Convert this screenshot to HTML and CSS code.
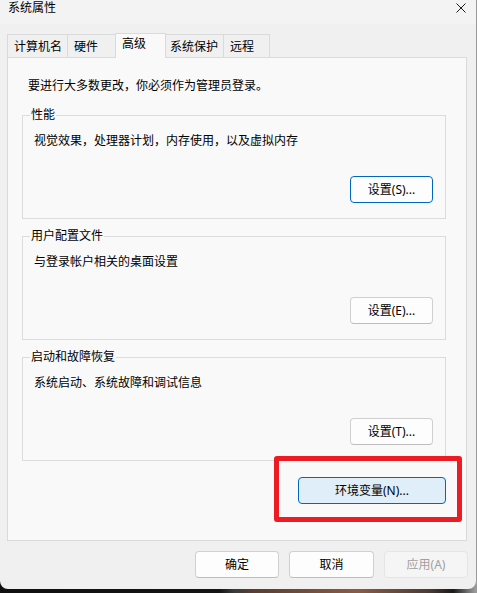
FILE: index.html
```html
<!DOCTYPE html>
<html lang="zh-CN">
<head>
<meta charset="utf-8">
<title>系统属性</title>
<link rel="stylesheet" href="styles.css">
</head>
<body>
<div class="window">
  <div class="titlebar">
    <span class="title">系统属性</span>
    <button class="close" aria-label="关闭">
      <svg width="10" height="10" viewBox="0 0 10 10"><path d="M0.5 0.5L9.5 9.5M9.5 0.5L0.5 9.5" stroke="#1a1a1a" stroke-width="1" fill="none"/></svg>
    </button>
  </div>
  <div class="content">
    <div class="tabs">
      <div class="tab tab-1">计算机名</div>
      <div class="tab tab-2">硬件</div>
      <div class="tab tab-3 tab-active">高级</div>
      <div class="tab tab-4">系统保护</div>
      <div class="tab tab-5">远程</div>
    </div>
    <div class="panel">
      <p class="note">要进行大多数更改，你必须作为管理员登录。</p>
      <fieldset class="group">
        <legend>性能</legend>
        <p class="desc">视觉效果，处理器计划，内存使用，以及虚拟内存</p>
        <div class="actions"><button class="btn btn-focus">设置(S)...</button></div>
      </fieldset>
      <fieldset class="group">
        <legend>用户配置文件</legend>
        <p class="desc">与登录帐户相关的桌面设置</p>
        <div class="actions"><button class="btn">设置(E)...</button></div>
      </fieldset>
      <fieldset class="group">
        <legend>启动和故障恢复</legend>
        <p class="desc">系统启动、系统故障和调试信息</p>
        <div class="actions"><button class="btn">设置(T)...</button></div>
      </fieldset>
      <div class="env-row">
        <div class="env-wrap">
          <button class="btn btn-hover env">环境变量(N)...</button>
          <span class="highlight"></span>
        </div>
      </div>
    </div>
    <div class="footer">
      <button class="btn foot-btn">确定</button>
      <button class="btn foot-btn foot-cancel">取消</button>
      <button class="btn foot-btn btn-disabled">应用(A)</button>
    </div>
  </div>
</div>
</body>
</html>
```

FILE: styles.css
```css
* { box-sizing: border-box; }

html, body {
  margin: 0;
  padding: 0;
}

body {
  width: 477px;
  height: 593px;
  overflow: hidden;
  background: linear-gradient(90deg, #101010 0, #141414 46%, #3a3a3a 49%, #5a3d32 53%, #8a5b44 75%, #4a3a34 90%, #1a1a1a 95%, #9a9a9a 99.6%);
  font-family: "Noto Sans", "Noto Sans CJK SC", sans-serif;
  font-size: 12px;
  color: #000;
}

.window {
  width: 476px;
  height: 589px;
  background: #f0f0f0;
  border-radius: 0 0 8px 8px;
  overflow: hidden;
  display: flex;
  flex-direction: column;
}

.titlebar {
  height: 24px;
  background: #f3f3f3;
  display: flex;
  justify-content: space-between;
  align-items: flex-start;
  padding-left: 8px;
}

.title {
  line-height: 16px;
}

.close {
  width: 10px;
  height: 10px;
  margin: 3px 10px 0 0;
  padding: 0;
  border: 0;
  background: none;
  display: block;
}

.close svg { display: block; }

.content {
  padding: 9px 9px 10px 7px;
  display: flex;
  flex-direction: column;
}

.tabs {
  display: flex;
  align-items: flex-end;
  height: 25px;
  margin-bottom: -1px;
  position: relative;
  z-index: 1;
}

.tab {
  height: 23px;
  margin-bottom: 1px;
  margin-left: -1px;
  border: 1px solid #dadada;
  border-bottom: none;
  background: #f0f0f0;
  padding: 4px 0 0 6px;
  line-height: 16px;
  white-space: nowrap;
}

.tab-1 { width: 61px; margin-left: 0; }
.tab-2 { width: 49px; }
.tab-3 { width: 51px; }
.tab-4 { width: 59px; padding-left: 4px; }
.tab-5 { width: 47px; }

.tab-active {
  height: 25px;
  margin-bottom: 0;
  padding-top: 2px;
  background: #f9f9f9;
  position: relative;
  z-index: 2;
}

.panel {
  border: 1px solid #dadada;
  background: #f9f9f9;
  padding: 20px 20px 36px 14px;
  display: flex;
  flex-direction: column;
}

.note {
  margin: 0 0 13px 6px;
  line-height: 16px;
}

.group {
  margin: 0 0 9px 0;
  padding: 0 12px 15px 7px;
  border: 1px solid #dcdcdc;
  min-width: 0;
}

.group legend {
  padding: 0 1px;
  line-height: 16px;
  font-size: 12px;
}

.desc {
  margin: 10px 0 0 4px;
  line-height: 16px;
}

.actions {
  margin-top: 27px;
  display: flex;
  justify-content: flex-end;
}

.btn {
  width: 83px;
  height: 27px;
  padding: 0;
  border: 1px solid #d0d0d0;
  border-bottom-color: #bdbdbd;
  border-radius: 4px;
  background: #fdfdfd;
  font-family: "Noto Sans", "Noto Sans CJK SC", sans-serif;
  font-size: 12px;
  line-height: 16px;
  color: #000;
}

.btn-focus {
  border-color: #0067c0;
}

.btn-hover {
  background: #e0eef9;
  border-color: #0067c0;
}

.env-row {
  margin-top: 7px;
  display: flex;
  justify-content: flex-end;
}

.env-wrap {
  position: relative;
}

.env {
  width: 148px;
  display: block;
}

.highlight {
  position: absolute;
  top: -21px;
  left: -24px;
  right: -16px;
  bottom: -18px;
  border: 5px solid #ed1c24;
  border-radius: 3px;
  pointer-events: none;
}

.footer {
  margin-top: 10px;
  margin-right: -1px;
  display: flex;
  justify-content: flex-end;
  gap: 10px;
}

.foot-btn { width: 84px; }
.foot-cancel { width: 85px; }

.btn-disabled {
  background: #f5f5f5;
  border-color: #e5e5e5;
  color: #a0a0a0;
}
```
